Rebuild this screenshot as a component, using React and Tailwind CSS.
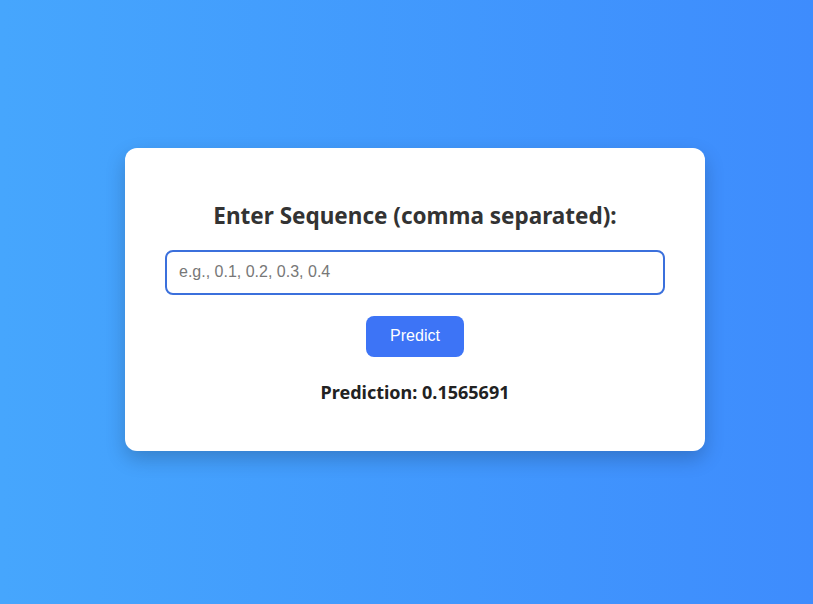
export default function App() {
  return (
    <div className="min-h-screen w-full flex items-center justify-center pl-[17px] pb-[6px] bg-gradient-to-r from-[#46a6fd] to-[#3e8cfd] font-['Open_Sans',sans-serif]">
      <div className="w-[580px] h-[303px] bg-white rounded-xl shadow-[0_8px_20px_rgba(0,0,0,0.2)] px-10 pt-[53px] flex flex-col items-center">
        <h2 className="text-[22.5px] leading-[30px] font-bold text-[#333] font-['Noto_Sans',sans-serif]">
          Enter Sequence (comma separated):
        </h2>
        <input
          type="text"
          placeholder="e.g., 0.1, 0.2, 0.3, 0.4"
          className="mt-[19px] w-full h-[45px] border-2 border-[#3b70dc] rounded-lg px-3 text-base text-[#333] placeholder:text-[#777777] font-['Liberation_Sans',sans-serif] outline-none"
        />
        <button className="mt-[21px] w-[98px] h-[41px] bg-[#3d74f6] text-white rounded-lg text-base font-['Liberation_Sans',sans-serif]">
          Predict
        </button>
        <p className="mt-[21px] text-lg font-bold text-[#222] font-['Noto_Sans',sans-serif]">
          Prediction: 0.1565691
        </p>
      </div>
    </div>
  );
}
